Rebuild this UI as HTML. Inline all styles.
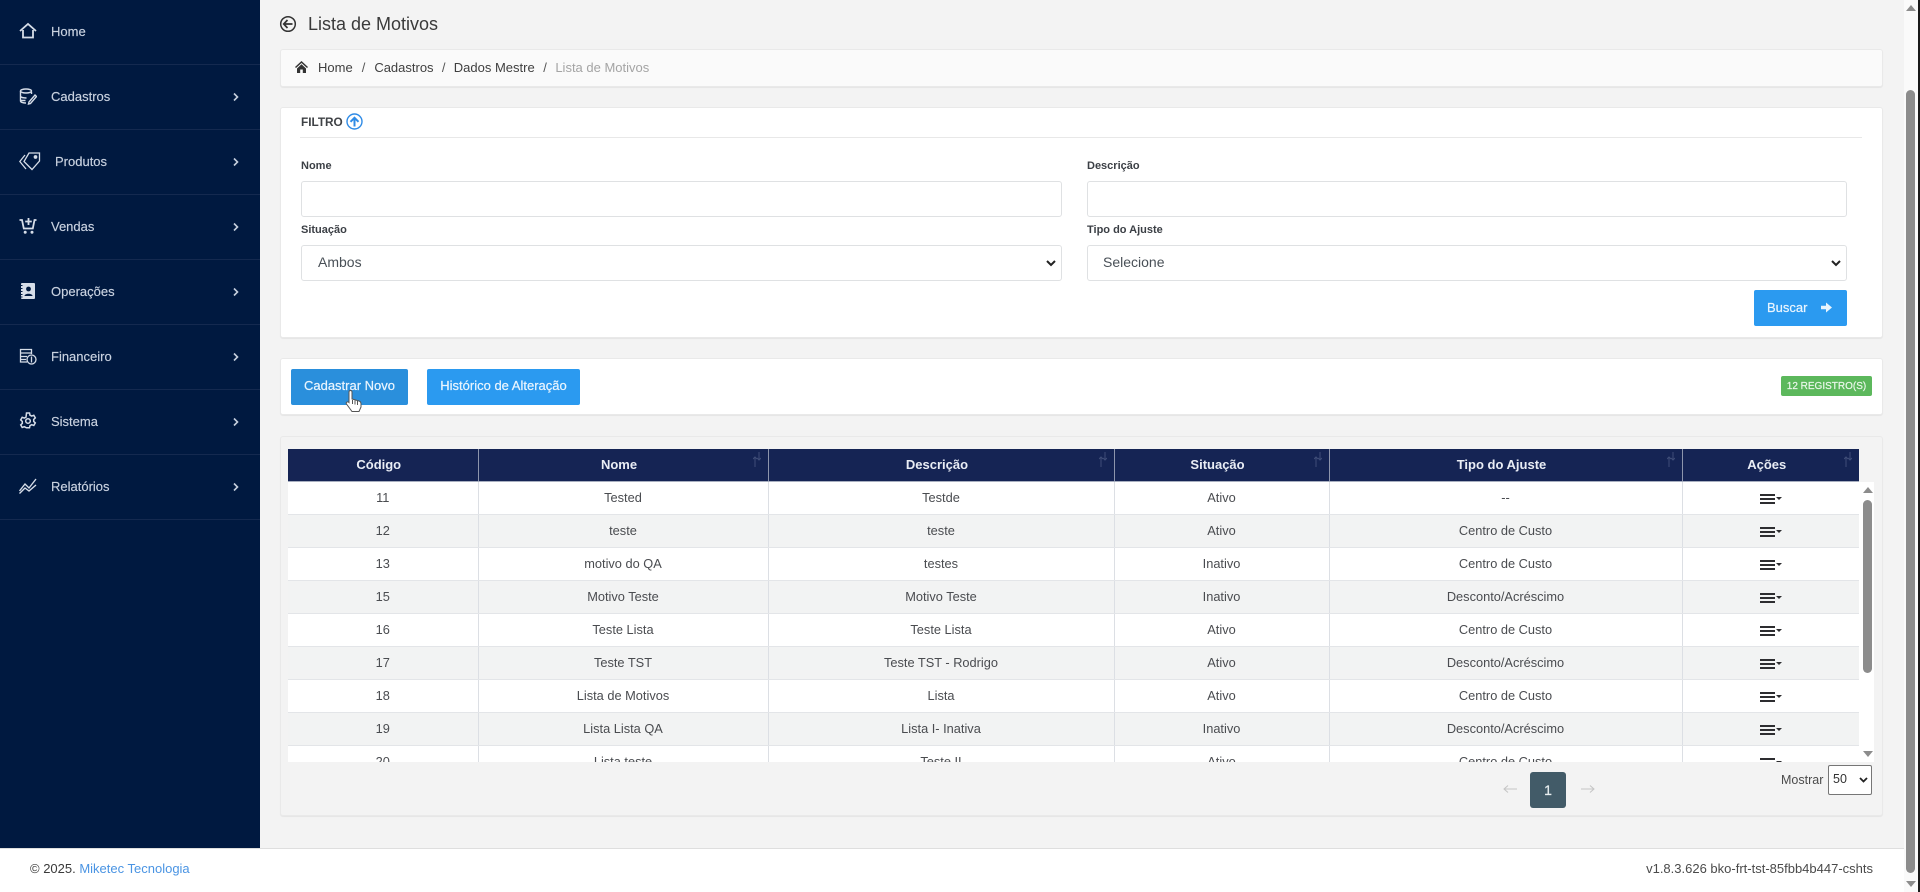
<!DOCTYPE html>
<html lang="pt-BR"><head><meta charset="utf-8"><title>Lista de Motivos</title>
<style>
*{box-sizing:border-box}
html,body{margin:0;padding:0;width:1920px;height:892px;overflow:hidden;background:#f3f3f3;font-family:"Liberation Sans",sans-serif;color:#333}
.a{position:absolute}
#side{left:0;top:0;width:260px;height:848px;background:#001940}
.it{position:absolute;left:0;width:260px;height:65px;border-bottom:1px solid #14294f;color:#c9d2e0;font-size:13px;-webkit-text-stroke:.15px #c9d2e0}
.it span{position:absolute;left:51px;top:24px;line-height:16px}
.it svg.i{position:absolute;left:19px;top:22px}
.it svg.c{position:absolute;left:232px;top:26px}
.card{position:absolute;left:280px;width:1603px;background:#fff;border:1px solid #e9e9e9;border-radius:3px;box-shadow:0 1px 1px rgba(0,0,0,.06)}
.lb{position:absolute;font-size:11px;font-weight:bold;color:#3b3f45;line-height:14px}
.inp{position:absolute;background:#fff;border:1px solid #dfe1e3;border-radius:3px;width:761px;height:36px;font-size:14px;color:#495057;line-height:33px;padding-left:15px}
.inp svg{position:absolute;right:5px;top:14px}
.btn{position:absolute;background:#2b9af0;color:#eaf5fe;font-size:13px;border-radius:2px;text-align:center;height:36px;line-height:34px;-webkit-text-stroke:.2px #eaf5fe}
#tb{position:absolute;left:288px;top:449px;width:1571px;border-collapse:collapse;table-layout:fixed;font-size:12.8px}
#tb th{background:#152454;color:#e9edf5;height:32px;font-size:13px;font-weight:bold;border-right:1px solid #8d95ac;border-bottom:1px solid #a8afc0;padding:0 8px 0 0;position:relative}
#tb th:last-child{border-right:0}
#tb td{height:33px;text-align:center;padding:0;color:#4a4c50;border-right:1px solid #dcdfe4;border-bottom:1px solid #e3e5e8;background:#fff}
#tb td:last-child{border-right:0}
#tb tr:nth-child(even) td{background:#f2f3f3}
.sort{position:absolute;right:7px;top:3px}
.m{display:inline-block;position:relative;left:0;top:1px;width:22px;height:11px;vertical-align:middle}
.m i{position:absolute;left:0;width:15px;height:2px;background:#2d2d30}
.m b{position:absolute;left:16px;top:3px;width:0;height:0;border:3px solid transparent;border-top:3px solid #2d2d30}
</style></head><body>

<div class="a" id="side">
<div class="it" style="top:0"><svg class="i" width="18" height="18" viewBox="0 0 18 18" fill="none" stroke="#d6dde8" stroke-width="1.8"><path d="M1 9 9 2l8 7M4 8v7.5h10V8"/></svg><span>Home</span></div>
<div class="it" style="top:65px"><svg class="i" width="18" height="18" viewBox="0 0 18 18" fill="none" stroke="#d6dde8" stroke-width="1.4"><ellipse cx="7" cy="4" rx="5.5" ry="2"/><path d="M1.500 4v10c0 1.200 2.500 2 5.500 2M1.500 9c0 1.200 2.500 2 6 2M12.500 5v2M1.500 13.500h5M10 15l6-7 1.500 1.500-6 7-2 .5z"/></svg><span>Cadastros</span><svg class="c" width="8" height="12" viewBox="0 0 8 12" fill="none" stroke="#c4cedd" stroke-width="1.600"><path d="M2 2.500 5.500 6 2 9.500"/></svg></div>
<div class="it" style="top:130px"><svg class="i" width="22" height="19" viewBox="0 0 22 19" fill="none" stroke="#d6dde8" stroke-width="1.3"><path d="M10 1h10.500v8L13 17.500 5 9.500z"/><path d="M6 3 .8 9.500 7 17"/><circle cx="16.500" cy="5" r="1.200" fill="#d6dde8"/></svg><span style="left:55px">Produtos</span><svg class="c" width="8" height="12" viewBox="0 0 8 12" fill="none" stroke="#c4cedd" stroke-width="1.600"><path d="M2 2.500 5.500 6 2 9.500"/></svg></div>
<div class="it" style="top:195px"><svg class="i" width="18" height="18" viewBox="0 0 18 18" fill="none" stroke="#d6dde8" stroke-width="1.800"><path d="M.5 3h2.500l1.800 8.500h9L15.500 3h2M9.500 1v7M6.200 4.500h6.600"/><circle cx="6.200" cy="15.200" r="1.500" fill="#d6dde8" stroke="none"/><circle cx="13" cy="15.200" r="1.500" fill="#d6dde8" stroke="none"/></svg><span>Vendas</span><svg class="c" width="8" height="12" viewBox="0 0 8 12" fill="none" stroke="#c4cedd" stroke-width="1.600"><path d="M2 2.500 5.500 6 2 9.500"/></svg></div>
<div class="it" style="top:260px"><svg class="i" width="18" height="18" viewBox="0 0 18 18"><rect x="2" y="1" width="14" height="16" rx="1" fill="#d6dde8"/><path d="M2 3.500h1.500M2 6.500h1.500M2 9.500h1.500M2 12.500h1.500M2 15h1.500" stroke="#001940" stroke-width="1"/><circle cx="9.500" cy="7" r="2.400" fill="#001940"/><path d="M5.500 14c0-3 8-3 8 0z" fill="#001940"/></svg><span>Operações</span><svg class="c" width="8" height="12" viewBox="0 0 8 12" fill="none" stroke="#c4cedd" stroke-width="1.600"><path d="M2 2.500 5.500 6 2 9.500"/></svg></div>
<div class="it" style="top:325px"><svg class="i" width="18" height="18" viewBox="0 0 18 18" fill="none" stroke="#d6dde8" stroke-width="1.3"><path d="M8 15H1.500V2.500h11V7M1.500 6h11M1.500 9.500H8M1.500 12.500H7"/><circle cx="12.500" cy="12.500" r="4.500"/><path d="M12.500 9.500v6"/></svg><span>Financeiro</span><svg class="c" width="8" height="12" viewBox="0 0 8 12" fill="none" stroke="#c4cedd" stroke-width="1.600"><path d="M2 2.500 5.500 6 2 9.500"/></svg></div>
<div class="it" style="top:390px"><svg class="i" width="18" height="18" viewBox="0 0 18 18" fill="none" stroke="#d6dde8" stroke-width="1.5"><circle cx="9" cy="9" r="2.300"/><path d="M7.500 1h3l.5 2.200 1.700.9 2.100-.8 1.500 2.600-1.600 1.500v2l1.600 1.500-1.500 2.600-2.100-.8-1.700.9-.5 2.200h-3L7 15.600l-1.700-.9-2.100.8-1.500-2.600 1.600-1.500v-2L1.700 7.900l1.500-2.600 2.100.8L7 5.200z"/></svg><span>Sistema</span><svg class="c" width="8" height="12" viewBox="0 0 8 12" fill="none" stroke="#c4cedd" stroke-width="1.600"><path d="M2 2.500 5.500 6 2 9.500"/></svg></div>
<div class="it" style="top:455px"><svg class="i" style="top:21px" width="18" height="18" viewBox="0 0 18 18" fill="none" stroke="#d6dde8" stroke-width="1.4"><path d="M.5 15 6 8l4 4 7-9M.5 17.500 6 12l4 3 7-6"/></svg><span>Relatórios</span><svg class="c" width="8" height="12" viewBox="0 0 8 12" fill="none" stroke="#c4cedd" stroke-width="1.600"><path d="M2 2.500 5.500 6 2 9.500"/></svg></div>
</div>

<svg class="a" style="left:279px;top:15px" width="18" height="18" viewBox="0 0 18 18" fill="none" stroke="#333" stroke-width="1.500"><circle cx="9" cy="9" r="7.300"/><path d="M13.500 9H5M8.500 5 4.700 9l3.800 4" stroke-width="1.700"/></svg>
<div class="a" style="left:308px;top:14px;font-size:18px;line-height:21px;color:#3a3a3a">Lista de Motivos</div>

<div class="card" style="top:49px;height:38px;background:#fafafa"></div>
<svg class="a" style="left:295px;top:61px" width="13" height="12" viewBox="0 0 13 12" fill="#333"><path d="M6.500 0 0 6l1 1 5.500-5 5.500 5 1-1zM2 7.500V12h3.200V8.500h2.600V12H11V7.500L6.500 3.300z"/></svg>
<div class="a" style="left:318px;top:60px;font-size:13px;line-height:15px;color:#3f3f3f;white-space:nowrap">Home<span style="margin:0 9px;color:#555">/</span>Cadastros<span style="margin:0 8.300px;color:#555">/</span>Dados Mestre<span style="margin:0 8.500px;color:#555">/</span><span style="color:#a4a4a4">Lista de Motivos</span></div>

<div class="card" style="top:107px;height:231px"></div>
<div class="a" style="left:301px;top:115px;font-size:11.800px;line-height:14px;font-weight:bold;color:#3f4246">FILTRO</div>
<svg class="a" style="left:346px;top:113px" width="17" height="17" viewBox="0 0 17 17" fill="none" stroke="#2f8be6" stroke-width="1.400"><circle cx="8.500" cy="8.500" r="7.500"/><path d="M8.500 13.500V5M4.500 8.800l4-4 4 4" stroke-width="2"/></svg>
<div class="a" style="left:300px;top:137px;width:1562px;height:1px;background:#e8e8e8"></div>

<div class="lb" style="left:301px;top:159px">Nome</div>
<div class="lb" style="left:1087px;top:159px">Descrição</div>
<div class="inp" style="left:301px;top:181px"></div>
<div class="inp" style="left:1087px;top:181px;width:760px"></div>
<div class="lb" style="left:301px;top:223px">Situação</div>
<div class="lb" style="left:1087px;top:223px">Tipo do Ajuste</div>
<div class="inp" style="left:301px;top:245px;padding-left:16px">Ambos<svg width="10" height="7" viewBox="0 0 10 7" fill="none" stroke="#222" stroke-width="2"><path d="M1 1l4 4 4-4"/></svg></div>
<div class="inp" style="left:1087px;top:245px;width:760px">Selecione<svg width="10" height="7" viewBox="0 0 10 7" fill="none" stroke="#222" stroke-width="2"><path d="M1 1l4 4 4-4"/></svg></div>
<div class="btn" style="left:1754px;top:290px;width:93px;padding-left:13px;text-align:left;line-height:36px">Buscar</div>
<svg class="a" style="left:1821px;top:302px" width="11" height="11" viewBox="0 0 11 11" fill="#e8f4fd"><path d="M0 3.800h5V.5L11 5.500l-6 5V7.200H0z"/></svg>

<div class="card" style="top:358px;height:57px"></div>
<div class="btn" style="left:291px;top:368.500px;width:117px;background:#2a8fdc">Cadastrar Novo</div>
<div class="btn" style="left:427px;top:368.500px;width:153px">Histórico de Alteração</div>
<svg class="a" style="left:345px;top:390px" width="17" height="23" viewBox="0 0 17 23"><path d="M4 2c0-2 3-2 3 0v7l7 2c1.500.5 2 1.500 2 3v3l-2 4.500H7L1.500 14c-1-1.500 1-3 2.500-1.500z" fill="#fff" stroke="#555" stroke-width="1"/><path d="M7.500 10v4M10 10.500v4M12.500 11v4" stroke="#555" stroke-width="1"/></svg>
<div class="a" style="left:1781px;top:376px;width:91px;height:20px;background:#5cb85c;border-radius:2px;color:#eaf7ea;font-size:10px;line-height:21px;text-align:center;-webkit-text-stroke:.2px #eaf7ea">12 REGISTRO(S)</div>

<div class="card" style="top:436px;height:380px;background:#f3f3f3"></div>
<div class="a" style="left:288px;top:449px;width:1586px;height:313px;overflow:hidden;background:#fff">
<table id="tb" style="left:0;top:0">
<colgroup><col style="width:190px"><col style="width:290px"><col style="width:346px"><col style="width:215px"><col style="width:353px"><col style="width:177px"></colgroup>
<thead><tr><th>Código</th><th>Nome<svg class="sort" width="8" height="15" viewBox="0 0 8 15" fill="none" stroke="#3f4d78" stroke-width="1"><path d="M2 15V5M0 7l2-2 2 2M6 0v8M4 6l2 2 2-2"/></svg></th><th>Descrição<svg class="sort" width="8" height="15" viewBox="0 0 8 15" fill="none" stroke="#3f4d78" stroke-width="1"><path d="M2 15V5M0 7l2-2 2 2M6 0v8M4 6l2 2 2-2"/></svg></th><th>Situação<svg class="sort" width="8" height="15" viewBox="0 0 8 15" fill="none" stroke="#3f4d78" stroke-width="1"><path d="M2 15V5M0 7l2-2 2 2M6 0v8M4 6l2 2 2-2"/></svg></th><th>Tipo do Ajuste<svg class="sort" width="8" height="15" viewBox="0 0 8 15" fill="none" stroke="#3f4d78" stroke-width="1"><path d="M2 15V5M0 7l2-2 2 2M6 0v8M4 6l2 2 2-2"/></svg></th><th>Ações<svg class="sort" width="8" height="15" viewBox="0 0 8 15" fill="none" stroke="#3f4d78" stroke-width="1"><path d="M2 15V5M0 7l2-2 2 2M6 0v8M4 6l2 2 2-2"/></svg></th></tr></thead>
<tbody>
<tr><td>11</td><td>Tested</td><td>Testde</td><td>Ativo</td><td>--</td><td><span class="m"><i style="top:0"></i><i style="top:4px"></i><i style="top:8px"></i><b></b></span></td></tr>
<tr><td>12</td><td>teste</td><td>teste</td><td>Ativo</td><td>Centro de Custo</td><td><span class="m"><i style="top:0"></i><i style="top:4px"></i><i style="top:8px"></i><b></b></span></td></tr>
<tr><td>13</td><td>motivo do QA</td><td>testes</td><td>Inativo</td><td>Centro de Custo</td><td><span class="m"><i style="top:0"></i><i style="top:4px"></i><i style="top:8px"></i><b></b></span></td></tr>
<tr><td>15</td><td>Motivo Teste</td><td>Motivo Teste</td><td>Inativo</td><td>Desconto/Acréscimo</td><td><span class="m"><i style="top:0"></i><i style="top:4px"></i><i style="top:8px"></i><b></b></span></td></tr>
<tr><td>16</td><td>Teste Lista</td><td>Teste Lista</td><td>Ativo</td><td>Centro de Custo</td><td><span class="m"><i style="top:0"></i><i style="top:4px"></i><i style="top:8px"></i><b></b></span></td></tr>
<tr><td>17</td><td>Teste TST</td><td>Teste TST - Rodrigo</td><td>Ativo</td><td>Desconto/Acréscimo</td><td><span class="m"><i style="top:0"></i><i style="top:4px"></i><i style="top:8px"></i><b></b></span></td></tr>
<tr><td>18</td><td>Lista de Motivos</td><td>Lista</td><td>Ativo</td><td>Centro de Custo</td><td><span class="m"><i style="top:0"></i><i style="top:4px"></i><i style="top:8px"></i><b></b></span></td></tr>
<tr><td>19</td><td>Lista Lista QA</td><td>Lista I- Inativa</td><td>Inativo</td><td>Desconto/Acréscimo</td><td><span class="m"><i style="top:0"></i><i style="top:4px"></i><i style="top:8px"></i><b></b></span></td></tr>
<tr><td>20</td><td>Lista teste</td><td>Teste II</td><td>Ativo</td><td>Centro de Custo</td><td><span class="m"><i style="top:0"></i><i style="top:4px"></i><i style="top:8px"></i><b></b></span></td></tr>
</tbody></table>
<div class="a" style="left:1571px;top:0;width:15px;height:33px;background:#f3f3f3"></div>
</div>
<div class="a" style="left:1863px;top:500px;width:9px;height:173px;background:#8c8c8c;border-radius:5px"></div>
<div class="a" style="left:1863px;top:487px;width:0;height:0;border:5px solid transparent;border-top:0;border-bottom:6px solid #8c8c8c"></div>
<div class="a" style="left:1863px;top:751px;width:0;height:0;border:5px solid transparent;border-bottom:0;border-top:6px solid #8c8c8c"></div>

<svg class="a" style="left:1503px;top:783px" width="14" height="12" viewBox="0 0 14 12" fill="none" stroke="#c4c4c4" stroke-width="1"><path d="M14 6H1M5 2.500 1 6l4 3.500"/></svg>
<div class="a" style="left:1530px;top:772px;width:36px;height:36px;background:#425b68;border-radius:3px;color:#e8eef0;font-size:14px;line-height:36px;text-align:center;-webkit-text-stroke:.3px #e8eef0">1</div>
<svg class="a" style="left:1581px;top:783px" width="14" height="12" viewBox="0 0 14 12" fill="none" stroke="#c4c4c4" stroke-width="1"><path d="M0 6h13M9 2.500 13 6 9 9.500"/></svg>
<div class="a" style="left:1781px;top:772px;font-size:12.500px;line-height:16px;color:#4b4b4b">Mostrar</div>
<div class="a" style="left:1828px;top:765px;width:44px;height:30px;border:1px solid #767676;border-radius:2px;background:#fff;font-size:12.500px;line-height:26px;padding-left:4px;color:#333">50<svg class="a" style="left:30px;top:11px" width="9" height="6" viewBox="0 0 9 6" fill="none" stroke="#222" stroke-width="1.800"><path d="M1 1l3.500 3.500L8 1"/></svg></div>

<div class="a" style="left:0;top:848px;width:1904px;height:44px;background:#fff;border-top:1px solid #dedede"></div>
<div class="a" style="left:30px;top:861px;font-size:13px;line-height:16px;color:#3a3a3a">© 2025. <span style="color:#4a94e3">Miketec Tecnologia</span></div>
<div class="a" style="right:47px;top:861px;font-size:13px;line-height:16px;color:#4a4a4a">v1.8.3.626 bko-frt-tst-85fbb4b447-cshts</div>

<div class="a" style="left:1904px;top:0;width:14px;height:892px;background:#fafafa"></div>
<div class="a" style="left:1918px;top:0;width:2px;height:892px;background:#1a1a1a"></div>
<div class="a" style="left:1906px;top:90px;width:9px;height:783px;background:#8c8c8c;border-radius:5px"></div>
<div class="a" style="left:1906px;top:5px;width:0;height:0;border:5px solid transparent;border-top:0;border-bottom:6px solid #8c8c8c"></div>
<div class="a" style="left:1906px;top:881px;width:0;height:0;border:5px solid transparent;border-bottom:0;border-top:6px solid #8c8c8c"></div>
</body></html>
